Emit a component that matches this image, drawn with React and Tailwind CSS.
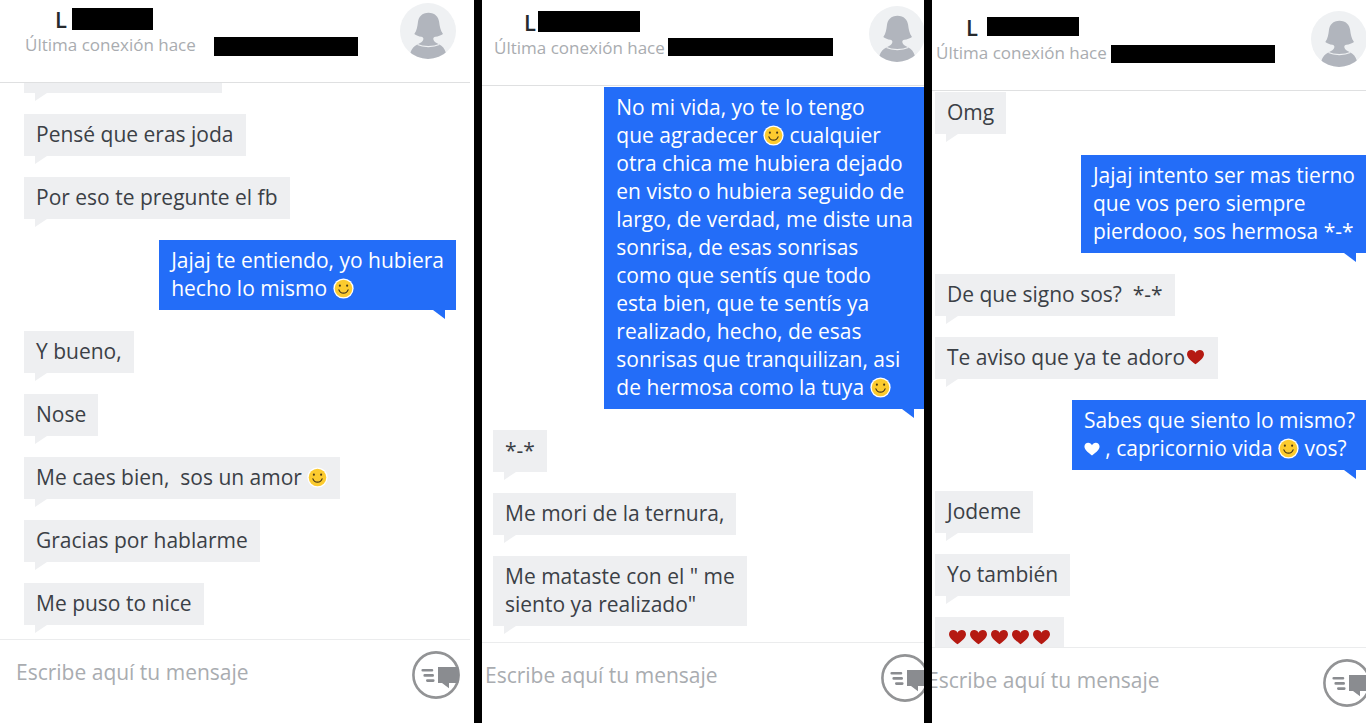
import clsx from 'clsx'

const CHATS = [
  {
    id: 'chat-1',
    panel: 'flex-[474]',
    screen: 'mr-1',
    list: 'justify-end pb-3.5',
    nameBar: 'ml-[5px] mt-2 h-[22px] w-[81px]',
    timeBar: 'ml-[18px] mt-1 h-[19px] w-36',
    messages: [
      { from: 'them', lines: [' '], box: 'w-[198px]' },
      { from: 'them', lines: ['Pensé que eras joda'] },
      { from: 'them', lines: ['Por eso te pregunte el fb'] },
      { from: 'me', lines: ['Jajaj te entiendo, yo hubiera', 'hecho lo mismo :)'] },
      { from: 'them', lines: ['Y bueno,'] },
      { from: 'them', lines: ['Nose'] },
      { from: 'them', lines: ['Me caes bien,  sos un amor :)'] },
      { from: 'them', lines: ['Gracias por hablarme'] },
      { from: 'them', lines: ['Me puso to nice'] },
    ],
  },
  {
    id: 'chat-2',
    panel: 'flex-[442]',
    screen: 'mt-[3px] -mb-[3px] -ml-[13px] -mr-[15px]',
    list: 'pt-px',
    nameBar: 'ml-[2px] mt-2 h-[21px] w-[102px]',
    timeBar: 'ml-[3px] mt-[2px] h-[18px] w-[165px]',
    messages: [
      {
        from: 'me',
        lines: [
          'No mi vida, yo te lo tengo',
          'que agradecer :) cualquier',
          'otra chica me hubiera dejado',
          'en visto o hubiera seguido de',
          'largo, de verdad, me diste una',
          'sonrisa, de esas sonrisas',
          'como que sentís que todo',
          'esta bien, que te sentís ya',
          'realizado, hecho, de esas',
          'sonrisas que tranquilizan, asi',
          'de hermosa como la tuya :)',
        ],
      },
      { from: 'them', lines: ['*-*'] },
      { from: 'them', lines: ['Me mori de la ternura,'] },
      { from: 'them', lines: ['Me mataste con el " me', 'siento ya realizado"'] },
    ],
  },
  {
    id: 'chat-3',
    panel: 'flex-[434]',
    screen: 'mt-2 -mb-2 -ml-[21px] -mr-[15px]',
    list: 'pt-px',
    nameBar: 'ml-[9px] mt-[9px] h-[19px] w-[92px]',
    timeBar: 'ml-1 mt-1 h-[18px] w-[164px]',
    messages: [
      { from: 'them', lines: ['Omg'] },
      { from: 'me', lines: ['Jajaj intento ser mas tierno', 'que vos pero siempre', 'pierdooo, sos hermosa *-*'] },
      { from: 'them', lines: ['De que signo sos?  *-*'] },
      { from: 'them', lines: ['Te aviso que ya te adoro<3'] },
      { from: 'me', lines: ['Sabes que siento lo mismo?', '<3 , capricornio vida :) vos?'] },
      { from: 'them', lines: ['Jodeme'] },
      { from: 'them', lines: ['Yo también'] },
      { from: 'them', lines: ['<3<3<3<3<3'] },
    ],
  },
]

function Smiley() {
  return (
    <svg viewBox="0 0 22 22" className="inline-block size-[21px] align-[-3px]" role="img" aria-label="smile">
      <circle cx="11" cy="11" r="10.6" fill="#fff" />
      <circle cx="11" cy="11" r="9.2" fill="#fccb2f" />
      <circle cx="7.2" cy="8" r="1.1" fill="#4a3a17" />
      <circle cx="14.8" cy="8" r="1.1" fill="#4a3a17" />
      <path d="M6.2 12.4c1.6 4.6 8 4.6 9.6 0" fill="none" stroke="#4a3a17" strokeWidth="1.3" strokeLinecap="round" />
    </svg>
  )
}

function Heart({ mine }) {
  return (
    <svg
      viewBox={mine ? '1.5 1.5 18 16' : '0 0 21 18'}
      className={clsx('inline-block', mine ? 'h-[15px] w-4 align-[-1px]' : 'h-[18px] w-[21px] align-[-1px]')}
      role="img"
      aria-label="heart"
    >
      <path
        d="M10.500 16.300C8 14 2 10.500 2 6.200 2 3.600 4 2 6.200 2c2 0 3.500 1 4.300 2.700C11.300 3 12.800 2 14.800 2 17 2 19 3.600 19 6.200c0 4.300-6 7.800-8.500 10.100z"
        fill={mine ? '#fff' : '#b51a12'}
      />
    </svg>
  )
}

function Line({ text, mine }) {
  return (
    <span className="block whitespace-pre">
      {text.split(/(:\)|<3)/).map((part, i) => {
        if (part === ':)') return <Smiley key={i} />
        if (part === '<3') return <Heart key={i} mine={mine} />
        return part
      })}
    </span>
  )
}

function Bubble({ message }) {
  const mine = message.from === 'me'

  return (
    <li
      className={clsx(
        'relative shrink-0 px-3 pt-1.5 pb-2 text-[21px] leading-7',
        mine ? 'self-end bg-[#236df8] text-white' : 'self-start bg-[#eeeff1] text-[#3b4046]',
        message.box
      )}
    >
      {message.lines.map((line) => (
        <Line key={line} text={line} mine={mine} />
      ))}
      {/* Tail */}
      <svg
        viewBox="0 0 12 9"
        className={clsx('absolute top-full h-[9px] w-3', mine ? 'right-[11px]' : 'left-[11px]')}
        aria-hidden="true"
      >
        <path d={mine ? 'M0 0H12V9Z' : 'M0 0H12L0 8Z'} fill={mine ? '#236df8' : '#eeeff1'} />
      </svg>
    </li>
  )
}

function Avatar() {
  return (
    <svg viewBox="0 0 56 56" className="mt-[3px] size-14 shrink-0" role="img" aria-label="L">
      <clipPath id="avatar-clip">
        <circle cx="28" cy="28" r="28" />
      </clipPath>
      <circle cx="28" cy="28" r="28" fill="#eff1f3" />
      <g clipPath="url(#avatar-clip)" fill="#b1b5bd">
        <path d="M28.500 9.700c-6.500 0-9.800 4-10.500 9-.7 5-1 8.500-3.700 12.300 2 1.600 4.500 2.500 7 2.700 1.700.3 2.300 1.300 2 2.800-.4 2-3 3.500-5.600 4.800-3.500 1.500-6 4.500-7.500 8.700L16 60h25l5-10c-1.500-4.200-3.500-7.200-7-8.700-2.700-1.300-5.200-2.800-5.600-4.800-.3-1.500.3-2.500 2-2.800 2.700-.2 5.500-1.100 7.600-2.700-2.700-3.800-3.200-7.300-3.900-12.300-.7-5-4.100-9-10.600-9z" />
        <path d="M17.500 41.500c5.500 2.700 16 2.700 21.800 0" fill="none" stroke="#eff1f3" strokeWidth="1.200" />
      </g>
    </svg>
  )
}

function SendIcon() {
  return (
    <svg viewBox="0 0 48 48" className="size-12" aria-hidden="true">
      <circle cx="24" cy="24" r="22.600" fill="#fff" stroke="#929395" strokeWidth="2.600" />
      <path d="M10.700 19.300H20M12.700 24.400h8M15.300 29.600h6" stroke="#8a8c90" strokeWidth="2.600" strokeLinecap="round" />
      <path d="M26 16h20.300c1.300 5 1.300 11 0 16H37v5.300L30 32h-4z" fill="#8a8c90" />
    </svg>
  )
}

function ChatScreen({ chat }) {
  return (
    <section className={clsx('flex min-w-0 overflow-hidden bg-white', chat.panel)}>
      <div className={clsx('flex min-w-0 flex-1 flex-col', chat.screen)}>

        {/* Header */}
        <header className="flex h-[83px] shrink-0 items-start justify-between border-b border-[#dfe0e1] pr-3.5 pl-[25px]">
          <div>
            <div className="flex h-[33px] items-start pl-[30px]">
              <h2 className="pt-[5px] text-[22px] leading-7 font-semibold text-[#26292d]">L</h2>
              <span className={clsx('bg-black', chat.nameBar)} />
            </div>
            <div className="flex items-start">
              <p className="text-[17px] leading-6 whitespace-nowrap text-[#a9acb0]">Última conexión hace</p>
              <span className={clsx('shrink-0 bg-black', chat.timeBar)} />
            </div>
          </div>
          <Avatar />
        </header>

        {/* Messages */}
        <ol className={clsx('flex min-h-0 flex-1 flex-col gap-[21px] overflow-hidden pr-3.5 pl-6', chat.list)}>
          {chat.messages.map((message) => (
            <Bubble key={message.lines[0]} message={message} />
          ))}
        </ol>

        {/* Composer */}
        <form
          className="flex h-[84px] shrink-0 items-start border-t border-[#ebeced] pr-2.5 pl-4"
          onSubmit={(e) => e.preventDefault()}
        >
          <input
            type="text"
            aria-label="Mensaje"
            placeholder="Escribe aquí tu mensaje"
            className="mt-4 h-8 min-w-0 flex-1 text-[21px] text-[#3b4046] outline-none placeholder:text-[#a9acb0]"
          />
          <button type="submit" aria-label="Enviar" className="mt-[11px] shrink-0">
            <SendIcon />
          </button>
        </form>

      </div>
    </section>
  )
}

function App() {
  return (
    <main className="flex h-screen gap-2 overflow-hidden bg-black font-['Open_Sans','Noto_Sans',sans-serif]">
      {CHATS.map((chat) => (
        <ChatScreen key={chat.id} chat={chat} />
      ))}
    </main>
  )
}

export default App
